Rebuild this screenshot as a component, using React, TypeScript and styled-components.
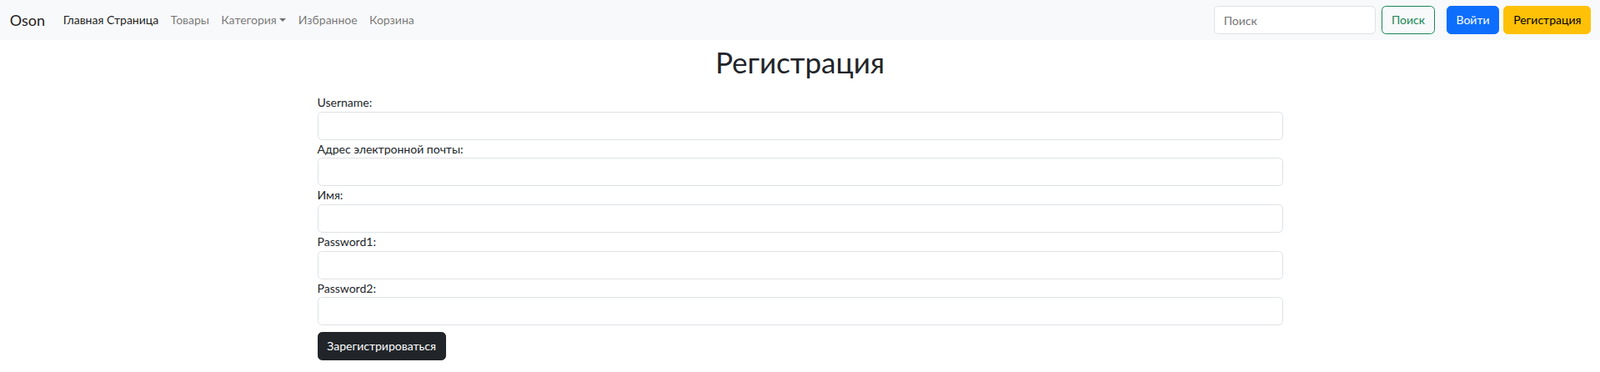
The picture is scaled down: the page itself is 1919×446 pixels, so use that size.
import React from 'react'
import styled, { createGlobalStyle } from 'styled-components'

// page is a bootstrap layout at 90% zoom: 1rem = 14.4px
const GlobalStyle = createGlobalStyle`
  body {
    margin: 0;
    font-family: Lato, Roboto, sans-serif;
    font-size: 14px;
    line-height: 21.6px;
    color: #212529;
    background: #fff;
  }
  * {
    box-sizing: border-box;
  }
`

const Navbar = styled.nav`
  display: flex;
  align-items: center;
  height: 48px;
  padding: 0 10.8px;
  background-color: #f8f9fa;
`

const Brand = styled.a`
  font-size: 18px;
  line-height: 27px;
  color: rgba(0, 0, 0, 0.9);
  text-decoration: none;
  margin-right: 14.4px;
  padding-left: 1px;
`

const NavList = styled.ul`
  display: flex;
  align-items: center;
  list-style: none;
  margin: 0;
  padding: 0;
  flex: 1;
`

const NavLink = styled.a<{ active?: boolean }>`
  display: flex;
  align-items: center;
  padding: 7.2px;
  color: ${({ active }) => (active ? 'rgba(0, 0, 0, 0.9)' : 'rgba(0, 0, 0, 0.55)')};
  text-decoration: none;
  cursor: pointer;
`

const Caret = styled.span`
  display: inline-block;
  margin-left: 3.7px;
  border-top: 4.3px solid;
  border-left: 4.3px solid transparent;
  border-right: 4.3px solid transparent;
`

const SearchForm = styled.form`
  display: flex;
  align-items: center;
  gap: 7.2px;
`

const SearchInput = styled.input`
  width: 194px;
  height: 34px;
  padding: 5.4px 10.8px;
  font: inherit;
  color: #212529;
  border: 1px solid #dee2e6;
  border-radius: 5.4px;
  background: #fff;
  outline: none;

  ::placeholder {
    color: #6c757d;
  }
`

const Button = styled.button<{ variant: 'outline' | 'primary' | 'warning' | 'dark' }>`
  height: 34px;
  padding: 5.4px 10.8px;
  font: inherit;
  border-radius: 5.4px;
  border: 1px solid;
  cursor: pointer;
  ${({ variant }) =>
    variant === 'outline'
      ? 'color: #198754; border-color: #198754; background: transparent;'
      : variant === 'primary'
      ? 'color: #fff; border-color: #0d6efd; background: #0d6efd;'
      : variant === 'warning'
      ? 'color: #000; border-color: #ffc107; background: #ffc107;'
      : 'color: #fff; border-color: #212529; background: #212529;'}
`

const AuthButtons = styled.div`
  display: flex;
  align-items: center;
  gap: 5px;
  margin-left: 14px;
`

const Container = styled.main`
  width: 1158px;
  margin: 0 auto;
  padding-top: 5px;
`

const Title = styled.h1`
  margin: 0 0 16px;
  text-align: center;
  font-size: 35px;
  font-weight: 400;
  line-height: 43.2px;
`

const Form = styled.form`
  display: flex;
  flex-direction: column;
`

const Label = styled.label`
  display: block;
  line-height: 21.6px;
`

const Field = styled.input`
  display: block;
  width: 100%;
  height: 34px;
  padding: 5.4px 10.8px;
  font: inherit;
  border: 1px solid #dee2e6;
  border-radius: 5.4px;
  background: #fff;
  outline: none;
`

const SubmitRow = styled.div`
  margin-top: 7.5px;
`

const fields = [
  { name: 'username', label: 'Username:', type: 'text' },
  { name: 'email', label: 'Адрес электронной почты:', type: 'email' },
  { name: 'first_name', label: 'Имя:', type: 'text' },
  { name: 'password1', label: 'Password1:', type: 'password' },
  { name: 'password2', label: 'Password2:', type: 'password' },
]

export default function App() {
  return (
    <>
      <GlobalStyle />
      <Navbar>
        <Brand href="#">Oson</Brand>
        <NavList>
          <li>
            <NavLink active>Главная Страница</NavLink>
          </li>
          <li>
            <NavLink>Товары</NavLink>
          </li>
          <li>
            <NavLink>
              Категория
              <Caret />
            </NavLink>
          </li>
          <li>
            <NavLink>Избранное</NavLink>
          </li>
          <li>
            <NavLink>Корзина</NavLink>
          </li>
        </NavList>
        <SearchForm onSubmit={(e) => e.preventDefault()}>
          <SearchInput type="search" placeholder="Поиск" />
          <Button variant="outline" type="submit">
            Поиск
          </Button>
        </SearchForm>
        <AuthButtons>
          <Button variant="primary">Войти</Button>
          <Button variant="warning">Регистрация</Button>
        </AuthButtons>
      </Navbar>
      <Container>
        <Title>Регистрация</Title>
        <Form onSubmit={(e) => e.preventDefault()}>
          {fields.map((f) => (
            <div key={f.name}>
              <Label htmlFor={f.name}>{f.label}</Label>
              <Field id={f.name} name={f.name} type={f.type} />
            </div>
          ))}
          <SubmitRow>
            <Button variant="dark" type="submit">
              Зарегистрироваться
            </Button>
          </SubmitRow>
        </Form>
      </Container>
    </>
  )
}
